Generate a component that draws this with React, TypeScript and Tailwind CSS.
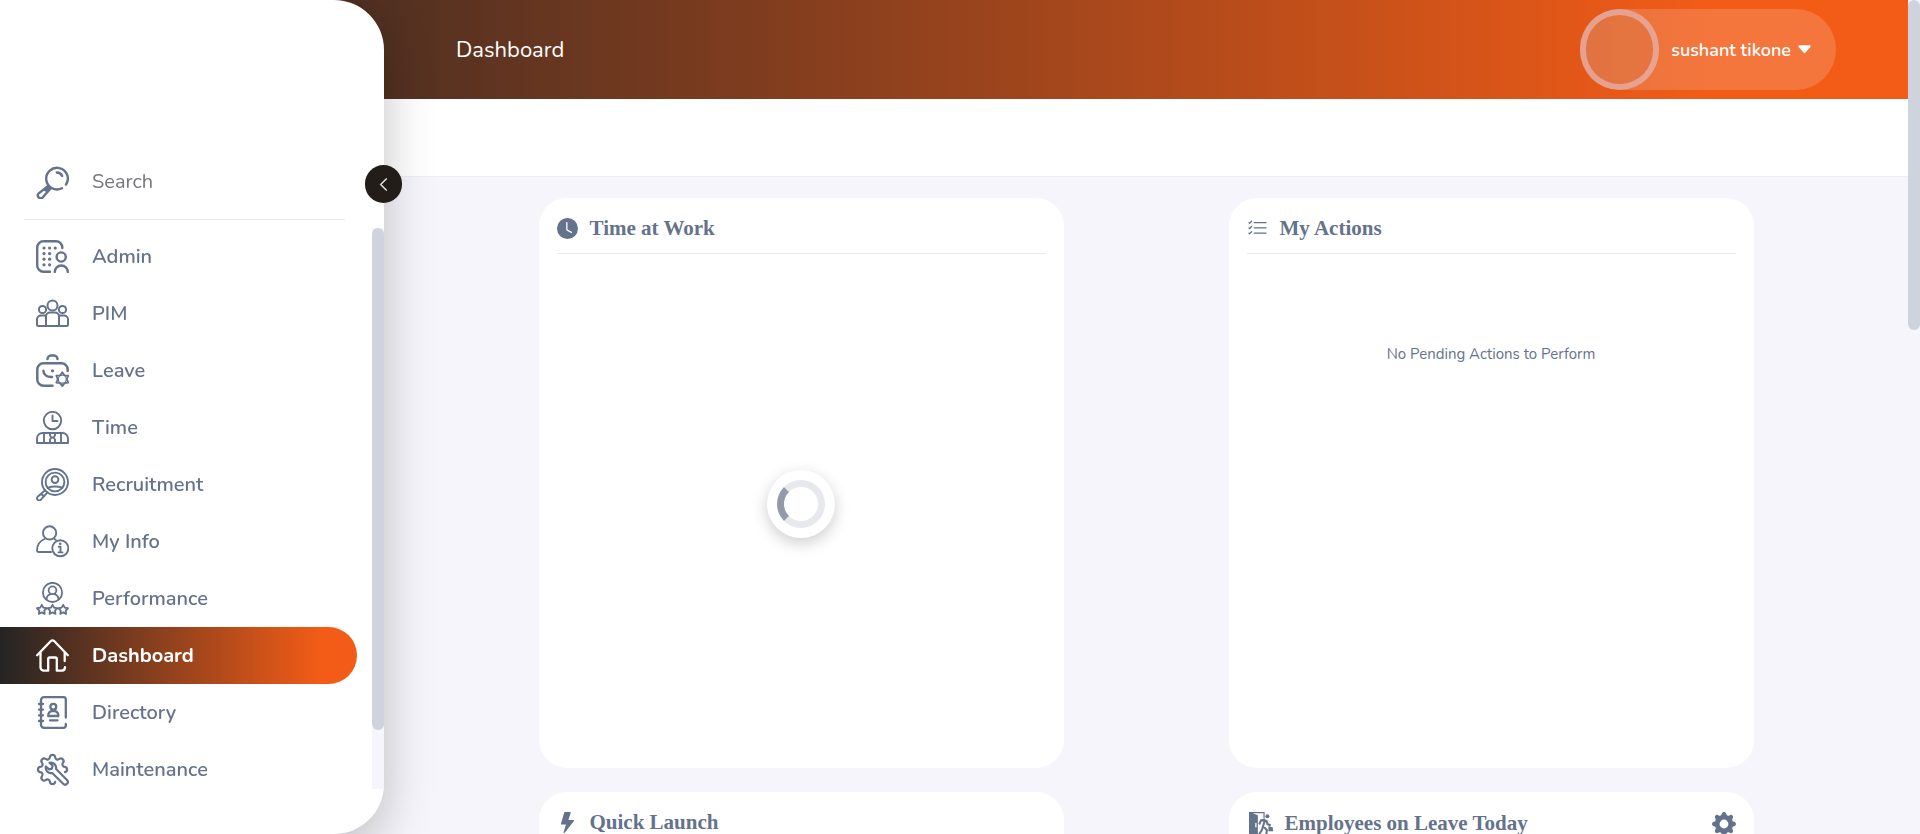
import type { ReactNode } from "react";
import {
  BsCaretDownFill,
  BsChevronLeft,
  BsClockFill,
  BsGearFill,
  BsLightningFill,
  BsListCheck,
} from "react-icons/bs";

function Glyph({ children, weight = 1.8 }: { children: ReactNode; weight?: number }) {
  return (
    <svg
      viewBox="0 0 33 33"
      className="h-[33px] w-[33px] shrink-0"
      fill="none"
      stroke="currentColor"
      strokeWidth={weight}
      strokeLinecap="round"
      strokeLinejoin="round"
      aria-hidden="true"
    >
      {children}
    </svg>
  );
}

function starPath(cx: number, cy: number, outer: number, inner: number, points: number) {
  const parts: string[] = [];
  for (let i = 0; i < points * 2; i++) {
    const r = i % 2 === 0 ? outer : inner;
    const a = (Math.PI * i) / points - Math.PI / 2;
    parts.push(`${(cx + r * Math.cos(a)).toFixed(2)} ${(cy + r * Math.sin(a)).toFixed(2)}`);
  }
  return `M${parts.join("L")}Z`;
}

// Eight rounded teeth, with the lower right one left out for the wrench handle.
function cogPath() {
  const at = (deg: number) => {
    const a = (Math.PI * deg) / 180;
    return `${(16.5 + 12.7 * Math.cos(a)).toFixed(2)} ${(16.5 + 12.7 * Math.sin(a)).toFixed(2)}`;
  };
  let d = `M${at(78)}`;
  for (let tooth = 90; tooth <= 360; tooth += 45) {
    d += `A2.700 2.700 0 0 1 ${at(tooth + 12)}`;
    if (tooth < 360) d += `A2.500 2.500 0 0 0 ${at(tooth + 33)}`;
  }
  return d;
}

const SearchGlyph = () => (
  <Glyph weight={2.4}>
    <path d="M30 18.6A10.8 10.8 0 1 0 26 22.2" />
    <path d="M20.800 6.500Q24.600 6.500 26.200 10" />
    <path d="M11.800 20.200 2.400 27.600a2.900 2.900 0 0 0 4 4.100L14.400 22.600M11.800 20.200l2.600 2.400M9.500 24.500l3-3" />
  </Glyph>
);

const AdminGlyph = () => (
  <Glyph weight={2.4}>
    <path d="M26.300 8V7.500a6.300 6.300 0 0 0-6.300-6.300H7.500A6.300 6.300 0 0 0 1.200 7.500v18A6.300 6.300 0 0 0 7.500 31.800H14" />
    <g fill="currentColor" stroke="none">
      {[8, 13.6, 19.2, 24.8].map((y) => (
        <g key={y}>
          <circle cx="8" cy={y} r="1.600" />
          <circle cx="13.600" cy={y} r="1.600" />
        </g>
      ))}
      <circle cx="19.200" cy="8" r="1.600" />
    </g>
    <circle cx="25.200" cy="17" r="4.600" />
    <path d="M18.800 32a6.500 6.500 0 0 1 13 0" />
  </Glyph>
);

const PimGlyph = () => (
  <Glyph weight={2}>
    <circle cx="16.500" cy="8.500" r="5" />
    <circle cx="6.500" cy="12.500" r="3.600" />
    <circle cx="26.500" cy="12.500" r="3.600" />
    <path d="M10 29V19.500a4 4 0 0 1 4-4h5a4 4 0 0 1 4 4V29" />
    <path d="M10 18.500H5a4 4 0 0 0-4 4V27.500A1.500 1.500 0 0 0 2.500 29h28a1.500 1.500 0 0 0 1.500-1.500v-5a4 4 0 0 0-4-4h-5" />
  </Glyph>
);

const LeaveGlyph = () => (
  <Glyph weight={2.5}>
    <path d="M11.500 5A3.600 3.600 0 0 1 15 1.500h3A3.600 3.600 0 0 1 21.500 5" />
    <path d="M31.700 17v-1.500a6.200 6.200 0 0 0-6.200-6.200h-18A6.200 6.200 0 0 0 1.300 15.500v10A6.200 6.200 0 0 0 7.500 31.700H16.500" />
    <path d="M7.400 16.800c.3 4 3.600 6.400 8.600 6.200" />
    <circle cx="16.500" cy="16.800" r="1.600" fill="currentColor" stroke="none" />
    <path strokeWidth="1.800" d={starPath(26.3, 25.2, 6.900, 4.500, 6)} />
    <circle cx="26.300" cy="25.200" r="4" strokeWidth="1.200" />
  </Glyph>
);

const TimeGlyph = () => (
  <Glyph weight={1.9}>
    <circle cx="16.500" cy="9.600" r="8.700" />
    <path d="M16.500 4.500v5.500h5" />
    <path d="M1 32v-4.500A5.500 5.500 0 0 1 6.500 22h20a5.500 5.500 0 0 1 5.500 5.500V32ZM8 22v10M25 22v10M14 22v2.500l1.500 2-1.500 2V32M19 22v2.500l-1.500 2 1.500 2V32M15.500 26.500h2" />
  </Glyph>
);

const RecruitmentGlyph = () => (
  <Glyph weight={1.9}>
    <circle cx="19" cy="14" r="13" />
    <circle cx="19" cy="14" r="9.400" />
    <circle cx="19" cy="11.600" r="3.400" />
    <path d="M11.500 19.800q7.500-2.600 15 0M9.200 22.200 1.600 28.800a2.200 2.200 0 0 0 3.100 3.100l6.800-7.500M5.500 26l2 2.200" />
  </Glyph>
);

const InfoGlyph = () => (
  <Glyph weight={1.9}>
    <circle cx="13.600" cy="7.900" r="6.600" />
    <path d="M15 27H2.800A1.800 1.800 0 0 1 1 25.200c0-5.200 3-9.200 7.500-11.200M18.500 14.200l1.200.6" />
    <circle cx="24.300" cy="23.300" r="8" />
    <path d="M22.700 21.800h1.800v5.300M22.500 27.400h4" />
    <circle cx="24.200" cy="18.800" r="1.300" fill="currentColor" stroke="none" />
  </Glyph>
);

const PerformanceGlyph = () => (
  <Glyph weight={1.8}>
    <circle cx="16.500" cy="10.400" r="9.600" />
    <circle cx="16.500" cy="8.300" r="3.900" />
    <path d="M10.500 17.500c0-3 2-4.700 4-5.300M22.500 17.500c0-3-2-4.700-4-5.300" />
    <path d={starPath(5.8, 27.8, 5, 2.6, 5)} />
    <path d={starPath(16.5, 27.8, 5, 2.6, 5)} />
    <path d={starPath(27.2, 27.8, 5, 2.6, 5)} />
  </Glyph>
);

const HomeGlyph = () => (
  <Glyph weight={2.3}>
    <path d="M1.200 16.200 14.600 2.300a2.700 2.700 0 0 1 3.800 0L31.800 16.200" />
    <path d="M4.500 14v14.200a3.500 3.500 0 0 0 3.500 3.500h4.200V20a1.500 1.500 0 0 1 1.500-1.500h5.600a1.500 1.500 0 0 1 1.500 1.500v11.700H26a3.500 3.500 0 0 0 3-3.500M28.700 14v8" />
  </Glyph>
);

const DirectoryGlyph = () => (
  <Glyph weight={2.3}>
    <path d="M29.800 21.500V3.500A2.300 2.300 0 0 0 27.500 1.200H8A3 3 0 0 0 5 4.200v24.600a3 3 0 0 0 3 3h19.500a2.300 2.300 0 0 0 2.300-2.300V28" />
    <path d="M3 8h4M3 13.600h4M3 19.400h4M3 25h4" />
    <circle cx="17.300" cy="10.800" r="2.900" />
    <path d="M12.200 20c0-3 1.800-4.500 3.300-4.800h3.600c1.500.3 3.300 1.800 3.300 4.800ZM14 24.300h7.500" />
  </Glyph>
);

const MaintenanceGlyph = () => (
  <Glyph weight={2.2}>
    <path d={cogPath()} />
    <path d="M13.500 9.800c3.600-1 7.200 1.800 6.600 6.200L31 27a2.600 2.600 0 0 1-3.800 3.800L16.200 20c-4 .8-7.300-2.500-6.300-6.500l3.200 2.900 2.800-.8.700-2.800Z" />
  </Glyph>
);

function LeaveDoorIcon() {
  return (
    <svg viewBox="0 0 23 23" className="ml-[2px] h-6 w-6" aria-hidden="true">
      <path fill="currentColor" d="M0 0h15v6h-1.200V1.200H3.500L8.500 3v18.500L6 23H0ZM6 10.500v4l1.200.3V10.200Z" fillRule="evenodd" />
      <circle cx="17.600" cy="4" r="1.900" fill="currentColor" />
      <path
        d="m15.500 7-3 10-3.200 5M15.600 7.300 11.500 8l-1.700 4M16.500 7.800l1.300 4 3 1M14.600 14.500l2.600 3-.8 5"
        fill="none"
        stroke="currentColor"
        strokeWidth="2"
        strokeLinejoin="round"
      />
      <path fill="currentColor" d="m18.600 13.300 4.200 1.500.2 3.700h-4.400Z" />
    </svg>
  );
}

const menu = [
  { label: "Admin", icon: <AdminGlyph /> },
  { label: "PIM", icon: <PimGlyph /> },
  { label: "Leave", icon: <LeaveGlyph /> },
  { label: "Time", icon: <TimeGlyph /> },
  { label: "Recruitment", icon: <RecruitmentGlyph /> },
  { label: "My Info", icon: <InfoGlyph /> },
  { label: "Performance", icon: <PerformanceGlyph /> },
  { label: "Dashboard", icon: <HomeGlyph />, active: true },
  { label: "Directory", icon: <DirectoryGlyph /> },
  { label: "Maintenance", icon: <MaintenanceGlyph /> },
];

function Sidebar() {
  return (
    <aside className="fixed inset-y-0 left-0 z-10 flex w-[384px] flex-col rounded-r-[50px] bg-white pt-[154px] pb-[45px] shadow-[0_15px_50px_rgba(0,0,0,0.24)]">
      <button
        type="button"
        aria-label="Collapse menu"
        className="absolute top-[165px] -right-[18px] flex h-[38px] w-[37px] items-center justify-center rounded-full bg-[#231d1a] text-white"
      >
        <BsChevronLeft className="h-[15px] w-[15px]" strokeWidth={0.5} />
      </button>
      <label className="mr-[39px] ml-6 flex h-[66px] items-start gap-[23px] border-b border-[#e8eaef] pt-3 pl-3 text-[#64728c]">
        <SearchGlyph />
        <input
          type="text"
          placeholder="Search"
          aria-label="Search"
          className="h-[31px] w-full min-w-0 bg-transparent text-xl outline-none placeholder:text-[#76777b]"
        />
      </label>
      <div className="mt-2 flex min-h-0 flex-1 overflow-hidden">
        <nav className="flex-1 pr-[15px]">
          <ul>
            {menu.map((item) => (
              <li key={item.label}>
                <a
                  href="#"
                  aria-current={item.active ? "page" : undefined}
                  className={
                    item.active
                      ? "flex h-[57px] items-center gap-[23px] rounded-r-full bg-linear-to-r/srgb from-[#242424] to-[#f35c17] to-90% pl-9 text-xl font-bold text-white"
                      : "flex h-[57px] items-center gap-[23px] pl-9 text-xl font-semibold text-[#64728c]"
                  }
                >
                  {item.icon}
                  <span>{item.label}</span>
                </a>
              </li>
            ))}
          </ul>
        </nav>
        <div className="w-3 bg-[#f6f5fb]">
          <div className="h-[89.5%] rounded-full bg-[#ced3de]" />
        </div>
      </div>
    </aside>
  );
}

function Card({
  icon,
  title,
  action,
  children,
}: {
  icon: ReactNode;
  title: string;
  action?: ReactNode;
  children?: ReactNode;
}) {
  return (
    <section className="flex h-[570px] w-full max-w-[525px] flex-col rounded-[28px] bg-white px-[18px] pb-[14px] text-[#64728c]">
      <header
        className={
          action
            ? "flex h-[60px] shrink-0 items-center gap-3 border-b border-[#e8eaef] pt-1"
            : "flex h-[56px] shrink-0 items-center gap-3 border-b border-[#e8eaef] pt-[6px]"
        }
      >
        {icon}
        <h2 className="flex-1 font-['Liberation_Serif',serif] text-[21px] font-bold">{title}</h2>
        {action}
      </header>
      {children}
    </section>
  );
}

function Spinner() {
  return (
    <div
      role="status"
      aria-label="Loading"
      className="flex h-[68px] w-[68px] items-center justify-center rounded-full bg-white shadow-[0_5px_16px_rgba(0,0,0,0.2)]"
    >
      <div className="h-12 w-12 rounded-full border-[7px] border-[#e8e9ef] border-l-[#929bab]" />
    </div>
  );
}

export default function App() {
  return (
    <div className="flex h-screen overflow-hidden bg-[#f6f5fb] font-['Nunito','Nunito_Sans','Lato',sans-serif]">
      <Sidebar />
      <div className="flex min-w-0 flex-1 flex-col">
        <header className="flex h-[99px] shrink-0 items-center justify-between bg-linear-to-r/srgb from-[#242424] to-[#f35c17] to-90% pr-[72px] pl-[456px] text-white">
          <h1 className="pt-[2px] text-[22px]">Dashboard</h1>
          <button
            type="button"
            className="flex h-[81px] items-center rounded-full bg-white/16 pr-[23px] text-lg font-semibold"
          >
            <span className="mr-3 h-[81px] w-[79px] rounded-full border-[6px] border-[#e8d0e0]/50 bg-[#c87850]/20" />
            <span>sushant tikone</span>
            <BsCaretDownFill className="ml-[5px] h-[17px] w-[17px]" />
          </button>
        </header>
        <div className="h-[78px] shrink-0 border-b border-[#eeeef2] bg-white" />
        <main className="grid grid-cols-2 justify-items-center gap-y-6 pt-[21px] pr-[72px] pl-[456px]">
          <Card icon={<BsClockFill className="h-[21px] w-[21px]" />} title="Time at Work">
            <div className="flex flex-1 items-center justify-center">
              <Spinner />
            </div>
          </Card>
          <Card icon={<BsListCheck className="h-[21px] w-[21px]" />} title="My Actions">
            <p className="pt-[89px] text-center text-[15px]">No Pending Actions to Perform</p>
          </Card>
          <Card icon={<BsLightningFill className="h-[21px] w-[21px]" />} title="Quick Launch" />
          <Card
            icon={<LeaveDoorIcon />}
            title="Employees on Leave Today"
            action={
              <button type="button" aria-label="Configure widget">
                <BsGearFill className="h-6 w-6" />
              </button>
            }
          />
        </main>
      </div>
      <div className="w-3 shrink-0 bg-[#f6f5fb]">
        <div className="h-[39.6%] rounded-full bg-[#ced3de]" />
      </div>
    </div>
  );
}
